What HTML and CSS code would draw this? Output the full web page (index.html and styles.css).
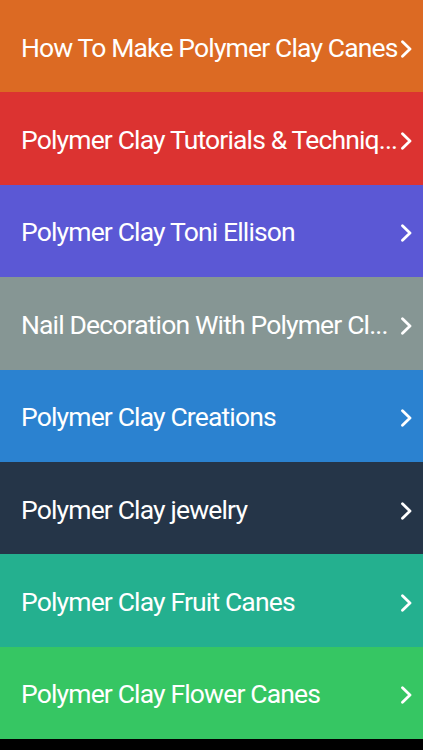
FILE: index.html
```html
<!DOCTYPE html>
<html lang="en">
<head>
<meta charset="utf-8">
<title>Polymer Clay</title>
<link rel="stylesheet" href="styles.css">
</head>
<body>
<ul class="menu">
  <li class="item c1"><span class="label">How To Make Polymer Clay Canes</span><svg class="chev" viewBox="0 0 12 18"><path d="M2.5 1.8 L10 9 L2.5 16.2"/></svg></li>
  <li class="item c2"><span class="label">Polymer Clay Tutorials &amp; Techniq...</span><svg class="chev" viewBox="0 0 12 18"><path d="M2.5 1.8 L10 9 L2.5 16.2"/></svg></li>
  <li class="item c3"><span class="label">Polymer Clay Toni Ellison</span><svg class="chev" viewBox="0 0 12 18"><path d="M2.5 1.8 L10 9 L2.5 16.2"/></svg></li>
  <li class="item c4"><span class="label">Nail Decoration With Polymer Cl...</span><svg class="chev" viewBox="0 0 12 18"><path d="M2.5 1.8 L10 9 L2.5 16.2"/></svg></li>
  <li class="item c5"><span class="label">Polymer Clay Creations</span><svg class="chev" viewBox="0 0 12 18"><path d="M2.5 1.8 L10 9 L2.5 16.2"/></svg></li>
  <li class="item c6"><span class="label">Polymer Clay jewelry</span><svg class="chev" viewBox="0 0 12 18"><path d="M2.5 1.8 L10 9 L2.5 16.2"/></svg></li>
  <li class="item c7"><span class="label">Polymer Clay Fruit Canes</span><svg class="chev" viewBox="0 0 12 18"><path d="M2.5 1.8 L10 9 L2.5 16.2"/></svg></li>
  <li class="item c8"><span class="label">Polymer Clay Flower Canes</span><svg class="chev" viewBox="0 0 12 18"><path d="M2.5 1.8 L10 9 L2.5 16.2"/></svg></li>
</ul>
</body>
</html>
```
FILE: styles.css
```css
html, body {
  margin: 0;
  padding: 0;
  background: #000;
  height: 750px;
  overflow: hidden;
}
.menu {
  list-style: none;
  margin: 0;
  padding: 0;
  display: flex;
  flex-direction: column;
}
.item {
  height: 92.375px;
  display: flex;
  align-items: center;
  padding: 0 11px 0 21px;
  color: #fff;
  font-family: Roboto, "Liberation Sans", sans-serif;
  font-size: 26.5px;
  letter-spacing: -0.85px;
}
.label {
  flex: 1;
  white-space: nowrap;
  margin-top: 2px;
}
.chev {
  width: 12px;
  height: 18px;
  margin-top: 5px;
  flex: none;
}
.chev path {
  fill: none;
  stroke: #fff;
  stroke-width: 2.8;
  stroke-linecap: round;
  stroke-linejoin: round;
}
.c1 { background: #dc6a23; }
.c2 { background: #dc3331; }
.c3 { background: #5b58d5; }
.c4 { background: #869694; }
.c5 { background: #2b82d0; }
.c6 { background: #253548; }
.c7 { background: #24b08f; }
.c8 { background: #36c663; }
```
